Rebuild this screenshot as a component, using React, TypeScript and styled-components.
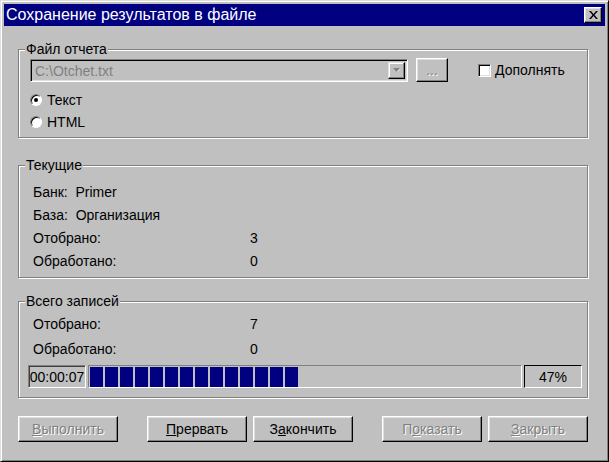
import styled, { createGlobalStyle } from "styled-components";

const GlobalStyle = createGlobalStyle`
  html, body {
    margin: 0;
    padding: 0;
    background: #c0c0c0;
  }
  body {
    font-family: "Liberation Sans", Arial, sans-serif;
    font-size: 14px;
    color: #000;
  }
`;

const Window = styled.div`
  box-sizing: border-box;
  width: 609px;
  height: 462px;
  display: flex;
  flex-direction: column;
  padding: 3px;
  background: #c0c0c0;
  border: 1px solid;
  border-color: #dfdfdf #000 #000 #dfdfdf;
  box-shadow: inset 1px 1px #fff, inset -1px -1px #808080;
`;

const TitleBar = styled.div`
  height: 22px;
  flex: none;
  display: flex;
  align-items: center;
  justify-content: space-between;
  padding: 0 3px 0 2px;
  background: #000080;
  color: #fff;
`;

const Title = styled.span`
  font-size: 16px;
  white-space: nowrap;
`;

const CloseButton = styled.div`
  box-sizing: border-box;
  width: 18px;
  height: 16px;
  display: flex;
  align-items: center;
  justify-content: center;
  background: #c0c0c0;
  border: 1px solid;
  border-color: #fff #000 #000 #fff;
  box-shadow: inset -1px -1px #808080, inset 1px 1px #dfdfdf;
`;

const Body = styled.div`
  display: flex;
  flex-direction: column;
  padding: 15px 17px 0 14px;
`;

const Group = styled.fieldset<{ $mt?: number }>`
  margin: ${(p) => p.$mt ?? 0}px 0 0;
  min-width: 0;
  padding: 0;
  border: 1px solid #808080;
  box-shadow: inset 1px 1px #fff, 1px 1px #fff;
`;

const Legend = styled.legend`
  margin-left: 6px;
  padding: 0 1px;
  line-height: 16px;
  background: #c0c0c0;
`;

const GroupBody = styled.div<{ $pad: string }>`
  display: flex;
  flex-direction: column;
  padding: ${(p) => p.$pad};
`;

const FileRow = styled.div`
  display: flex;
  align-items: flex-end;
`;

const Combo = styled.div`
  box-sizing: border-box;
  width: 378px;
  height: 23px;
  display: flex;
  align-items: center;
  justify-content: space-between;
  padding: 2px;
  border: 1px solid;
  border-color: #808080 #fff #fff #808080;
  box-shadow: inset 1px 1px #000, inset -1px -1px #dfdfdf;
`;

const ComboText = styled.span`
  padding-left: 2px;
  color: #808080;
`;

const ComboArrow = styled.div`
  box-sizing: border-box;
  width: 17px;
  height: 17px;
  display: flex;
  align-items: center;
  justify-content: center;
  border: 1px solid;
  border-color: #dfdfdf #000 #000 #dfdfdf;
  box-shadow: inset -1px -1px #808080, inset 1px 1px #fff;
`;

const Button = styled.button<{ $w?: number; $h?: number }>`
  box-sizing: border-box;
  width: ${(p) => p.$w ?? 100}px;
  height: ${(p) => p.$h ?? 26}px;
  padding: 0;
  font-family: inherit;
  font-size: 14px;
  color: #000;
  background: #c0c0c0;
  border: 1px solid;
  border-color: #fff #000 #000 #fff;
  box-shadow: inset -1px -1px #808080, inset 1px 1px #dfdfdf;

  &:disabled {
    color: #808080;
    text-shadow: 1px 1px #fff;
  }
`;

const BrowseButton = styled(Button)`
  margin-left: 8px;
  line-height: 10px;
`;

const CheckLabel = styled.label`
  display: flex;
  align-items: center;
  gap: 4px;
  margin-left: 30px;
  align-self: center;
`;

const CheckBox = styled.span`
  box-sizing: border-box;
  width: 13px;
  height: 13px;
  background: #fff;
  border: 1px solid;
  border-color: #808080 #fff #fff #808080;
  box-shadow: inset 1px 1px #000, inset -1px -1px #dfdfdf;
`;

const RadioRow = styled.label<{ $mt?: number }>`
  height: 22px;
  display: flex;
  align-items: center;
  gap: 5px;
  margin-top: ${(p) => p.$mt ?? 0}px;
`;

const Radio = styled.span<{ $checked?: boolean }>`
  box-sizing: border-box;
  width: 12px;
  height: 12px;
  display: flex;
  align-items: center;
  justify-content: center;
  border-radius: 50%;
  background: #fff;
  border: 1px solid;
  border-color: #808080 #fff #fff #808080;
  box-shadow: inset 1px 1px #000;

  &::after {
    content: "";
    width: 4px;
    height: 4px;
    border-radius: 50%;
    background: ${(p) => (p.$checked ? "#000" : "transparent")};
  }
`;

const InfoRow = styled.div<{ $h: number }>`
  height: ${(p) => p.$h}px;
  display: grid;
  grid-template-columns: 217px auto;
  align-items: center;
`;

const ProgressRow = styled.div`
  height: 23px;
  display: flex;
  gap: 2px;
  margin-top: 4px;
  margin-left: -5px;
`;

const Readout = styled.div<{ $dark?: boolean }>`
  box-sizing: border-box;
  width: 58px;
  display: flex;
  align-items: center;
  justify-content: center;
  border: 1px solid;
  border-color: ${(p) => (p.$dark ? "#000" : "#808080")} #fff #fff
    ${(p) => (p.$dark ? "#000" : "#808080")};
  box-shadow: ${(p) => (p.$dark ? "none" : "inset 1px 1px #404040")};
`;

const Bar = styled.div`
  box-sizing: border-box;
  flex: 1;
  display: flex;
  gap: 2px;
  padding: 1px;
  border: 1px solid;
  border-color: #808080 #fff #fff #808080;
`;

const Block = styled.div`
  width: 13px;
  height: 20px;
  background: #000080;
`;

const ButtonRow = styled.div`
  display: flex;
  justify-content: space-between;
  margin-top: 18px;
`;

const ButtonGroup = styled.div`
  display: flex;
  gap: 6px;
`;

const U = styled.span`
  text-decoration: underline;
`;

const percent = 47;
const blocks = Math.round((percent / 100) * 29);

export default function App() {
  return (
    <>
      <GlobalStyle />
      <Window>
        <TitleBar>
          <Title>Сохранение результатов в файле</Title>
          <CloseButton>
            <svg width="9" height="8" viewBox="0 0 9 8">
              <path d="M0 0h2l2.5 3L7 0h2L5.5 4 9 8H7L4.5 5 2 8H0l3.5-4z" fill="#000" />
            </svg>
          </CloseButton>
        </TitleBar>
        <Body>
          <Group>
            <Legend>Файл отчета</Legend>
            <GroupBody $pad="1px 0 4px 11px">
              <FileRow>
                <Combo>
                  <ComboText>C:\Otchet.txt</ComboText>
                  <ComboArrow>
                    <svg width="7" height="5" viewBox="0 0 7 5">
                      <path d="M1 1h6L4 4z" fill="#fff" />
                      <path d="M0 0h7L3.5 4z" fill="#808080" />
                    </svg>
                  </ComboArrow>
                </Combo>
                <BrowseButton disabled $w={32} $h={24}>
                  ...
                </BrowseButton>
                <CheckLabel>
                  <CheckBox />
                  Дополнять
                </CheckLabel>
              </FileRow>
              <RadioRow $mt={7}>
                <Radio $checked />
                Текст
              </RadioRow>
              <RadioRow>
                <Radio />
                HTML
              </RadioRow>
            </GroupBody>
          </Group>

          <Group $mt={19}>
            <Legend>Текущие</Legend>
            <GroupBody $pad="7px 0 5px 14px">
              <InfoRow $h={23}>
                <span>Банк:&nbsp; Primer</span>
              </InfoRow>
              <InfoRow $h={23}>
                <span>База:&nbsp; Организация</span>
              </InfoRow>
              <InfoRow $h={23}>
                <span>Отобрано:</span>
                <span>3</span>
              </InfoRow>
              <InfoRow $h={23}>
                <span>Обработано:</span>
                <span>0</span>
              </InfoRow>
            </GroupBody>
          </Group>

          <Group $mt={15}>
            <Legend>Всего записей</Legend>
            <GroupBody $pad="2px 5px 9px 14px">
              <InfoRow $h={25}>
                <span>Отобрано:</span>
                <span>7</span>
              </InfoRow>
              <InfoRow $h={25}>
                <span>Обработано:</span>
                <span>0</span>
              </InfoRow>
              <ProgressRow>
                <Readout>00:00:07</Readout>
                <Bar>
                  {Array.from({ length: blocks }, (_, i) => (
                    <Block key={i} />
                  ))}
                </Bar>
                <Readout $dark>{percent}%</Readout>
              </ProgressRow>
            </GroupBody>
          </Group>

          <ButtonRow>
            <Button disabled>
              <U>В</U>ыполнить
            </Button>
            <ButtonGroup>
              <Button>
                <U>П</U>рервать
              </Button>
              <Button>
                З<U>а</U>кончить
              </Button>
            </ButtonGroup>
            <ButtonGroup>
              <Button disabled>
                П<U>о</U>казать
              </Button>
              <Button disabled>
                <U>З</U>акрыть
              </Button>
            </ButtonGroup>
          </ButtonRow>
        </Body>
      </Window>
    </>
  );
}
